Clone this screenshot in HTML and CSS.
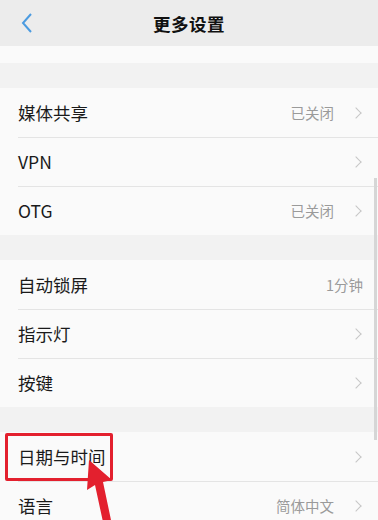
FILE: index.html
```html
<!DOCTYPE html>
<html lang="zh">
<head>
<meta charset="utf-8">
<link rel="stylesheet" href="styles.css">
</head>
<body>
<div class="screen">
  <header class="topbar">
    <svg class="back" width="14" height="22" viewBox="0 0 14 22"><path d="M11 2 L3 11 L11 20" fill="none" stroke="#4b9be0" stroke-width="2"/></svg>
    <h1 class="title">更多设置</h1>
  </header>
  <div class="partial"></div>
  <div class="gap"></div>
  <section class="group">
    <div class="row"><span class="label">媒体共享</span><span class="value">已关闭</span><span class="chev"></span></div>
    <div class="row"><span class="label">VPN</span><span class="chev"></span></div>
    <div class="row"><span class="label">OTG</span><span class="value">已关闭</span><span class="chev"></span></div>
  </section>
  <div class="gap"></div>
  <section class="group">
    <div class="row"><span class="label">自动锁屏</span><span class="value nochev">1分钟</span></div>
    <div class="row"><span class="label">指示灯</span><span class="chev"></span></div>
    <div class="row"><span class="label">按键</span><span class="chev"></span></div>
  </section>
  <div class="gap"></div>
  <section class="group">
    <div class="row"><span class="label">日期与时间</span><span class="chev"></span><span class="mark"></span></div>
    <div class="row"><span class="label">语言</span><span class="value">简体中文</span><span class="chev"></span></div>
  </section>
  <div class="scrollbar"></div>
  <svg class="arrow" width="40" height="64" viewBox="0 0 40 64"><path d="M8 2 L6 32 L14 27 L22 64 L30 62 L22 24 L31 22 Z" fill="#e3202e"/></svg>
</div>
</body>
</html>
```
FILE: styles.css
```css
* { box-sizing: border-box; }
html, body { margin: 0; padding: 0; }
body { background: #f2f2f2; font-family: "Noto Sans CJK SC", "Noto Sans", sans-serif; }
.screen { position: relative; width: 378px; height: 520px; overflow: hidden; background: #f2f2f2; }
.topbar { height: 46px; background: #ececec; display: flex; align-items: center; justify-content: center; position: relative; }
.back { position: absolute; left: 20px; top: 12px; }
.title { margin: 0; font-size: 17.5px; font-weight: 700; color: #111; letter-spacing: 0.5px; }
.partial { height: 17px; background: #fafafa; }
.gap { height: 25px; background: #f2f2f2; }
.group { background: #fafafa; }
.row { height: 49px; display: flex; align-items: center; padding: 0 15px 0 18px; position: relative; }
.row + .row::before { content: ""; position: absolute; left: 18px; right: 0; top: 0; height: 1px; background: #e4e4e4; }
.label { flex: 1; font-size: 17.5px; color: #1a1a1a; }
.value { font-size: 14.5px; color: #9a9a9a; margin-right: 18px; }
.value.nochev { margin-right: 0; }
.chev { width: 8px; height: 8px; border-top: 1.4px solid #c6c6c6; border-right: 1.4px solid #c6c6c6; transform: rotate(45deg); margin-right: 3px; }
.mark { position: absolute; left: 5px; top: 1px; width: 108px; height: 48px; border: 3px solid #e3202e; border-radius: 2px; }
.scrollbar { position: absolute; right: 1px; top: 178px; width: 3px; height: 262px; background: #d6d6d6; }
.arrow { position: absolute; left: 81px; top: 458px; }
```
